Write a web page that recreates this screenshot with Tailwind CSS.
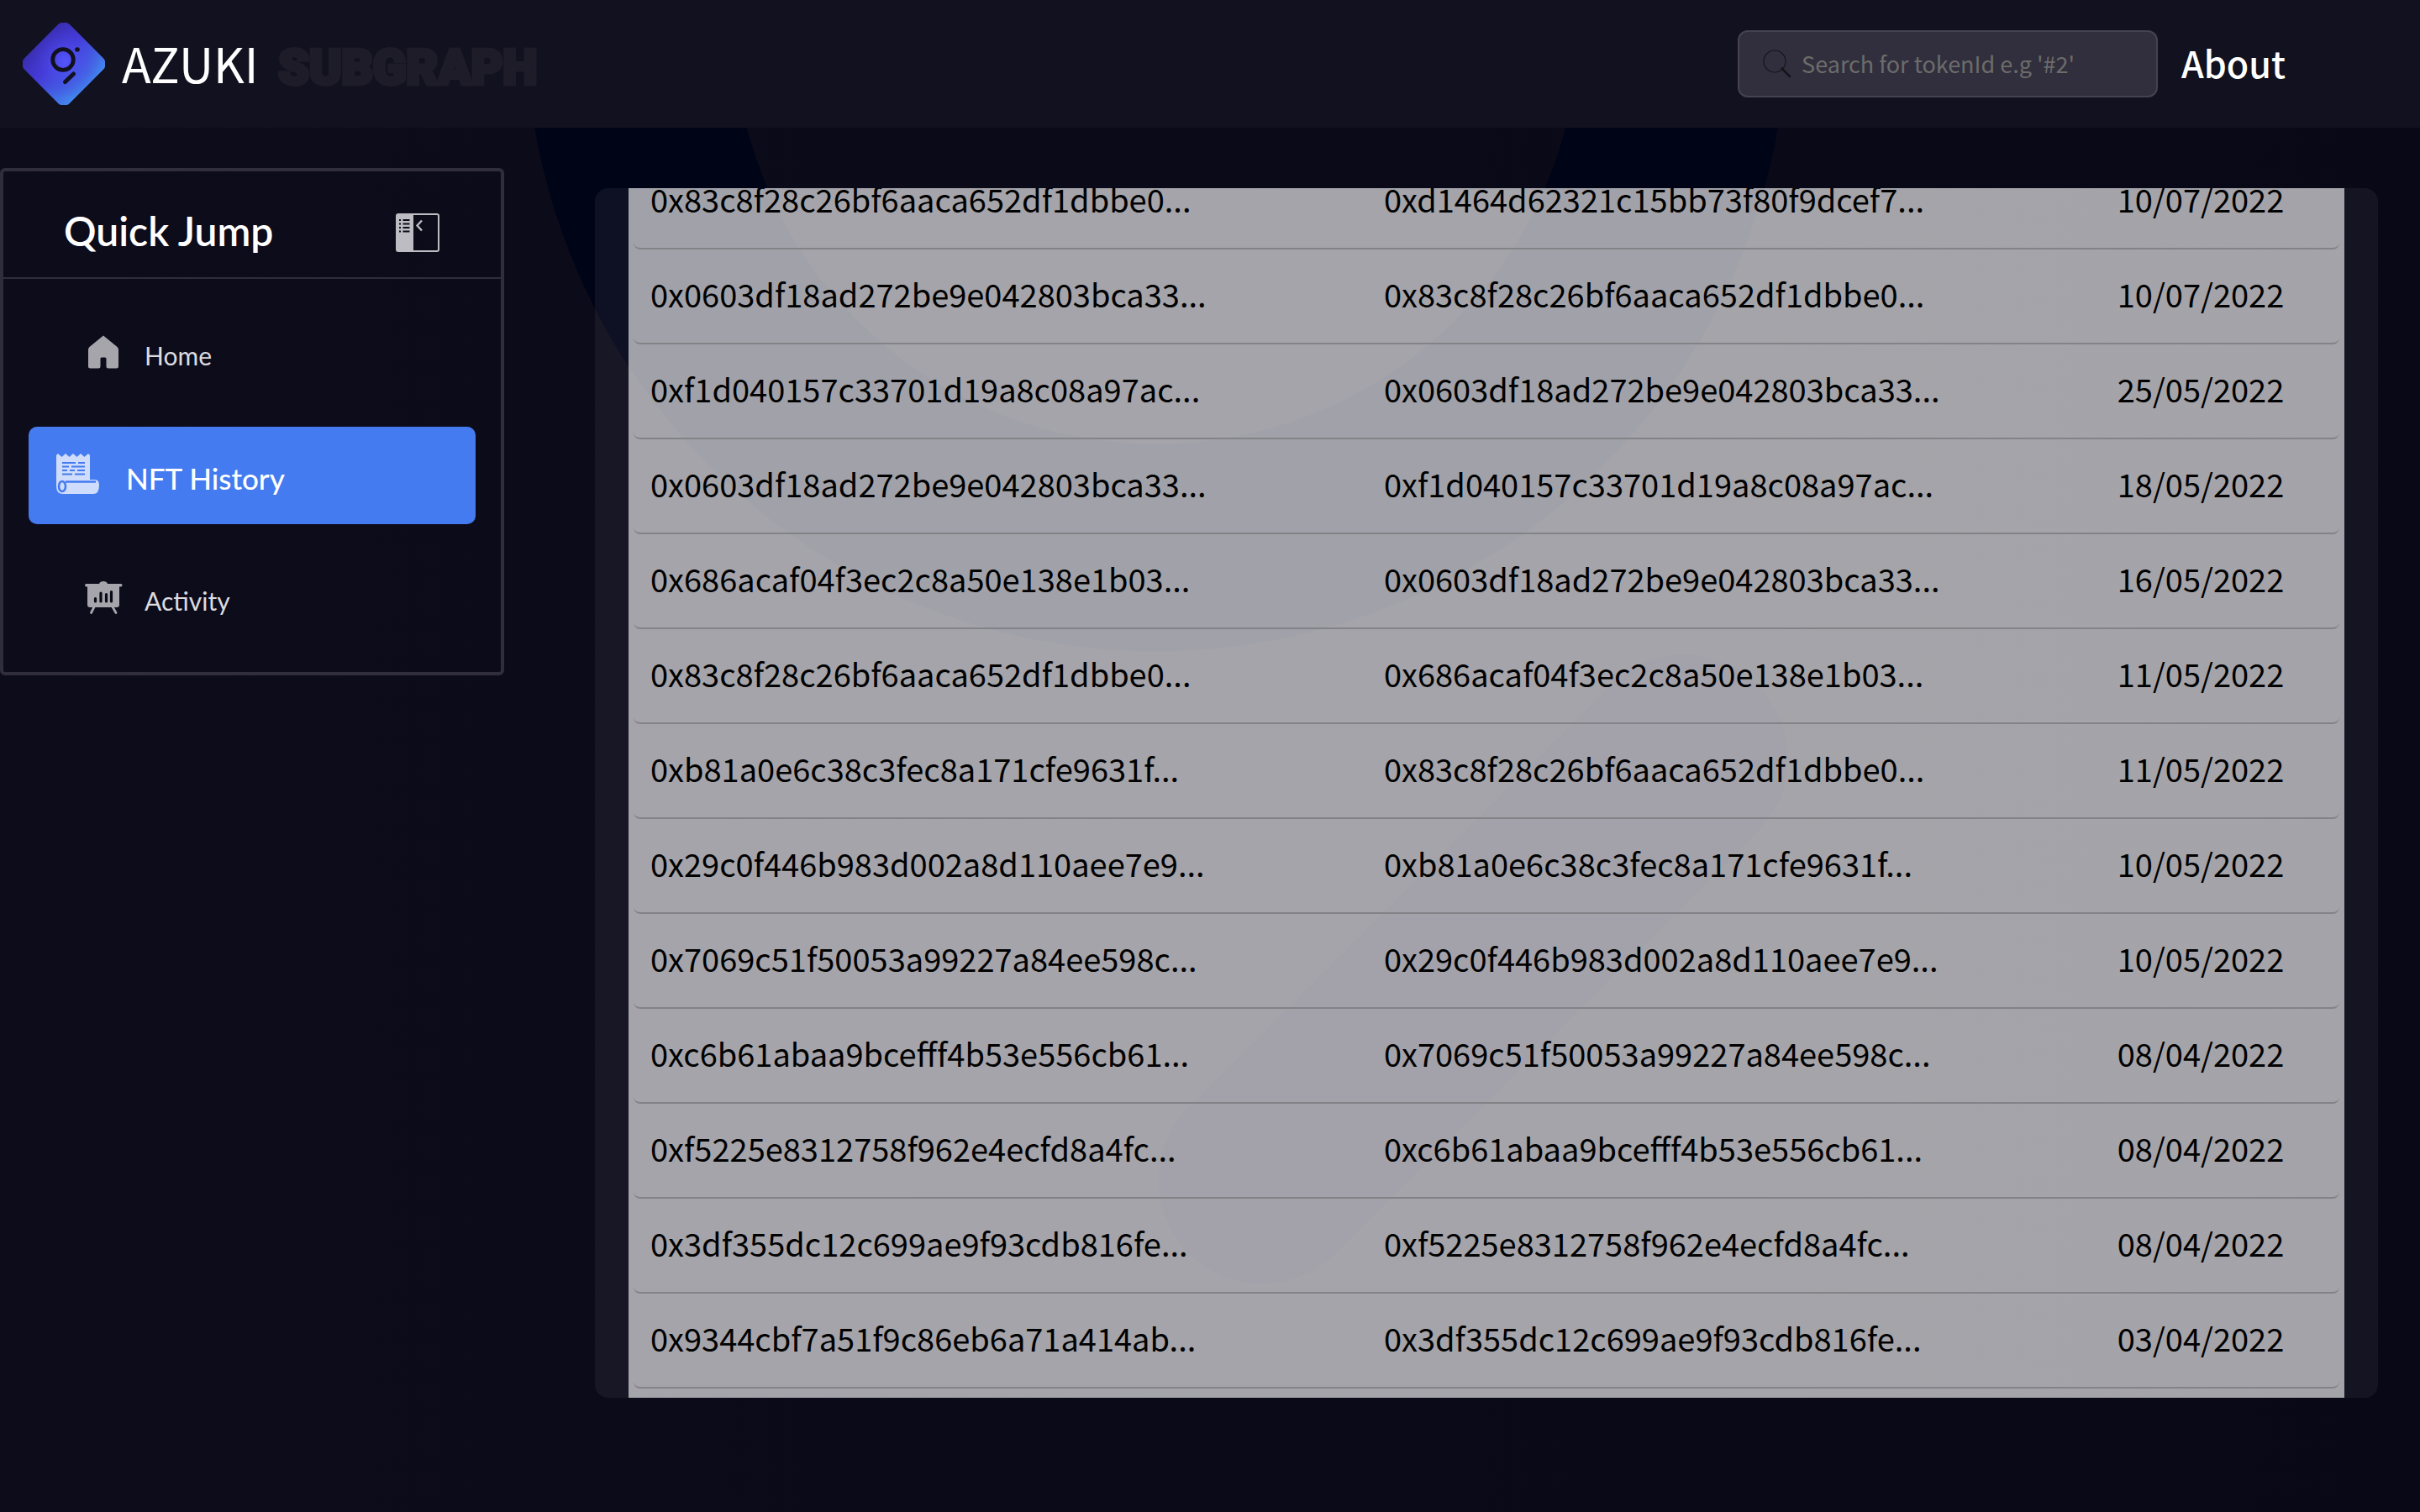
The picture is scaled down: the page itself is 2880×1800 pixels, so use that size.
<!DOCTYPE html>
<html lang="en">
<head>
<meta charset="utf-8">
<title>Azuki Subgraph</title>
<script src="https://cdn.jsdelivr.net/npm/@tailwindcss/browser@4"></script>
</head>
<body class="relative min-h-screen overflow-x-hidden bg-[#0b0a19] bg-linear-to-r from-[#0d0c1b] to-[#090816] font-[Lato,sans-serif] text-white">

<!-- Backdrop emblem -->
<svg class="absolute inset-0 h-full w-full" viewBox="0 0 2880 1800" preserveAspectRatio="xMidYMin slice" fill="none" aria-hidden="true">
  <circle cx="1376" cy="25" r="627" stroke="#000417" stroke-width="247"/>
  <path d="M1502 1405 2004 903" stroke="#05041a" stroke-width="247" stroke-linecap="round"/>
</svg>

<div class="relative flex min-h-screen flex-col">
  <header class="flex h-[152px] items-center bg-[#12111f] pl-[27px] pr-[160px]">
    <a href="#" class="flex items-center" aria-label="Azuki Subgraph">
      <svg class="size-[98px]" viewBox="0 0 98 98" fill="none" aria-hidden="true">
        <defs>
          <linearGradient id="side" x1="0" y1="49" x2="98" y2="49" gradientUnits="userSpaceOnUse">
            <stop offset="0" stop-color="#3529a0"/><stop offset=".4" stop-color="#443ad6"/><stop offset="1" stop-color="#4298f4"/>
          </linearGradient>
          <radialGradient id="glow" cx="48" cy="46" r="44" gradientUnits="userSpaceOnUse">
            <stop offset="0" stop-color="#5356fc"/><stop offset="1" stop-color="#4338d4" stop-opacity="0"/>
          </radialGradient>
        </defs>
        <rect x="11" y="11" width="76" height="76" rx="10" transform="rotate(45 49 49)" fill="url(#side)"/>
        <rect x="11" y="11" width="76" height="76" rx="10" transform="rotate(45 49 49)" fill="url(#glow)"/>
        <circle cx="48" cy="44" r="12.3" stroke="#12111f" stroke-width="4.8"/>
        <circle cx="65" cy="32" r="2.8" fill="#12111f"/>
        <path d="M50.500 70.500 60.500 61" stroke="#12111f" stroke-width="5" stroke-linecap="round"/>
      </svg>
      <span class="ml-5 pb-1 font-['Noto_Sans_CJK_SC',sans-serif] text-[57px] leading-[80px]">AZUKI</span>
      <span class="ml-6 pt-2 font-[Roboto,sans-serif] text-[58px] leading-[80px] font-black text-[#1e1c29] [-webkit-text-stroke:5px_#1e1c29]">SUBGRAPH</span>
    </a>
    <label class="ml-auto flex h-20 w-[500px] items-center rounded-xl border-2 border-[#45434f] bg-[#312f3d] pl-7">
      <svg class="size-[34px]" viewBox="0 0 34 34" fill="none" stroke="#15141c" stroke-linecap="round" aria-hidden="true">
        <circle cx="14" cy="14" r="13" stroke-width="1.200"/>
        <path d="M22.500 22.500 32 32" stroke-width="2.600"/>
      </svg>
      <input type="search" aria-label="Search by token id" placeholder="Search for tokenId e.g '#2'" class="ml-3 h-full min-w-0 flex-1 bg-transparent pb-0.5 font-['Noto_Sans_CJK_SC',sans-serif] text-[27px] outline-none placeholder:text-[#6c6c6a]">
    </label>
    <a href="#" class="ml-7 pb-1 font-['Noto_Sans_CJK_SC',sans-serif] text-[43px] leading-[60px] font-medium">About</a>
  </header>

  <div class="flex items-start">
    <aside class="mt-12 w-[600px] shrink-0 rounded-md border-4 border-[#302e3c]">
      <div class="flex h-[128px] items-center justify-between border-b-2 border-[#302e3c] pt-5 pr-[72px] pl-[72px]">
        <h2 class="pb-1 text-[48px] leading-[60px] font-semibold">Quick Jump</h2>
        <button type="button" aria-label="Collapse menu">
          <svg class="block size-[54px]" viewBox="0 0 54 54" fill="none" aria-hidden="true">
            <rect x="2" y="5" width="50" height="44" rx="2" stroke="#bdbcc2" stroke-width="2"/>
            <path d="M2 5h20v44H2z" fill="#bdbcc2"/>
            <path d="M5 12h2M5 16.500h2M5 21h2M5 25.500h2M9.500 12h8M9.500 16.500h8M9.500 21h8M9.500 25.500h8" stroke="#0b0a18" stroke-width="2.200"/>
            <path d="M32 12.500 26.500 18.500 32 24.500" stroke="#bdbcc2" stroke-width="2.400"/>
          </svg>
        </button>
      </div>
      <nav class="flex flex-col gap-[30px] px-[30px] pt-[30px] pb-[30px]">
        <a href="#" class="flex h-[116px] items-center pl-16 text-[30px] leading-10 text-[#dcdce0]">
          <svg class="mr-[26px] size-[48px]" viewBox="0 0 48 48" fill="#a6a5ac" aria-hidden="true">
            <path d="M25 1.500 41.500 15q1.500 1.300 1.500 3.500V38q0 2.500-2.500 2.500H31q-2.500 0-2.500-2.500V29q0-1.500-1.500-1.500h-4q-1.500 0-1.500 1.500v9q0 2.500-2.500 2.500H9.500Q7 40.500 7 38V18.500Q7 16.300 8.500 15Z" transform="translate(0 2)"/>
          </svg>
          <span class="pt-1.5">Home</span>
        </a>
        <a href="#" aria-current="page" class="flex h-[116px] items-center rounded-[10px] bg-[#447bf0] pl-8 text-[35px] leading-10 font-medium">
          <svg class="mr-[30px] size-[54px]" viewBox="0 0 54 54" fill="none" aria-hidden="true">
            <path d="M1 3 3 1l4.500 4L12 1l4.500 4L21 1l4.500 4L30 1l4.500 4L39 1l2 2v29h6q5 0 5 7 0 10-7 10H9q-8 0-8-9Z" fill="#cfdcfb"/>
            <path d="M8 12h16M27 12h8M8 16.500h8M19 16.500h16M8 21h6M17 21h6M26 21h9M8 25.500h12M23 25.500h12" stroke="#447bf0" stroke-width="2.200"/>
            <path d="M12 34.500h36" stroke="#447bf0" stroke-width="2.400"/>
            <ellipse cx="8" cy="40" rx="4" ry="6" stroke="#447bf0" stroke-width="2.600"/>
          </svg>
          <span class="pt-1.5">NFT History</span>
        </a>
        <a href="#" class="flex h-[116px] items-center pl-16 text-[30px] leading-10 text-[#dcdce0]">
          <svg class="mr-[26px] size-[48px]" viewBox="0 0 48 48" fill="none" aria-hidden="true">
            <g transform="translate(0 3)">
              <path d="M20 4q1-3 5-3t5 3h16q1.500 0 1.500 1.500T46 7.500h-2V29q0 3-3 3H9q-3 0-3-3V7.500H4.500Q3 7 3 5.500T4.500 4Z" fill="#a6a5ac"/>
              <path d="M14 31.500 10.500 38.500M36 31.500 40 38.500" stroke="#a6a5ac" stroke-width="2.800" stroke-linecap="round"/>
              <path d="M15.500 21.500v3.500M22 15v10M28.500 16.500V25M34.500 13.500V25" stroke="#0b0a18" stroke-width="3.200" stroke-linecap="round"/>
            </g>
          </svg>
          <span class="pt-1.5">Activity</span>
        </a>
      </nav>
    </aside>

    <main class="mt-[72px] mr-[50px] mb-[136px] ml-[108px] min-w-0 flex-1 overflow-hidden rounded-2xl bg-white/5 px-10">
      <div class="overflow-hidden bg-white/61 px-1.5 pb-[11px]">
        <table class="-mt-10 w-full table-fixed border-separate border-spacing-0 text-left font-['Noto_Sans_CJK_SC',sans-serif] text-[38px] leading-[50px] text-black">
          <colgroup><col class="w-[43%]"><col class="w-[43%]"><col class="w-[14%]"></colgroup>
          <tbody id="transfers"></tbody>
        </table>
      </div>
    </main>
  </div>
</div>

<script>
  const transfers = [
    ["0x83c8f28c26bf6aaca652df1dbbe0...", "0xd1464d62321c15bb73f80f9dcef7...", "10/07/2022"],
    ["0x0603df18ad272be9e042803bca33...", "0x83c8f28c26bf6aaca652df1dbbe0...", "10/07/2022"],
    ["0xf1d040157c33701d19a8c08a97ac...", "0x0603df18ad272be9e042803bca33...", "25/05/2022"],
    ["0x0603df18ad272be9e042803bca33...", "0xf1d040157c33701d19a8c08a97ac...", "18/05/2022"],
    ["0x686acaf04f3ec2c8a50e138e1b03...", "0x0603df18ad272be9e042803bca33...", "16/05/2022"],
    ["0x83c8f28c26bf6aaca652df1dbbe0...", "0x686acaf04f3ec2c8a50e138e1b03...", "11/05/2022"],
    ["0xb81a0e6c38c3fec8a171cfe9631f...", "0x83c8f28c26bf6aaca652df1dbbe0...", "11/05/2022"],
    ["0x29c0f446b983d002a8d110aee7e9...", "0xb81a0e6c38c3fec8a171cfe9631f...", "10/05/2022"],
    ["0x7069c51f50053a99227a84ee598c...", "0x29c0f446b983d002a8d110aee7e9...", "10/05/2022"],
    ["0xc6b61abaa9bcefff4b53e556cb61...", "0x7069c51f50053a99227a84ee598c...", "08/04/2022"],
    ["0xf5225e8312758f962e4ecfd8a4fc...", "0xc6b61abaa9bcefff4b53e556cb61...", "08/04/2022"],
    ["0x3df355dc12c699ae9f93cdb816fe...", "0xf5225e8312758f962e4ecfd8a4fc...", "08/04/2022"],
    ["0x9344cbf7a51f9c86eb6a71a414ab...", "0x3df355dc12c699ae9f93cdb816fe...", "03/04/2022"]
  ];
  const cell = "h-[113px] border-b-2 border-[#838286] pb-1.5 pl-5 whitespace-nowrap first:rounded-bl-lg last:rounded-br-lg";
  document.getElementById("transfers").innerHTML = transfers
    .map(row => "<tr>" + row.map(v => `<td class="${cell}">${v}</td>`).join("") + "</tr>")
    .join("");
</script>
</body>
</html>
